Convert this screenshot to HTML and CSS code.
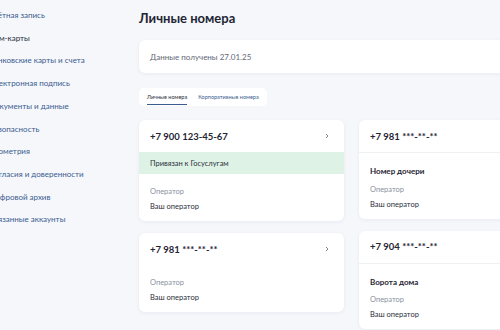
FILE: index.html
```html
<!DOCTYPE html>
<html lang="ru">
<head>
<meta charset="utf-8">
<title>Личные номера</title>
<link rel="stylesheet" href="styles.css">
</head>
<body>
<div class="page">
  <nav class="sidebar">
    <a class="nav-item">Учётная запись</a>
    <a class="nav-item active">Сим-карты</a>
    <a class="nav-item">Банковские карты и счета</a>
    <a class="nav-item">Электронная подпись</a>
    <a class="nav-item">Документы и данные</a>
    <a class="nav-item">Безопасность</a>
    <a class="nav-item">Биометрия</a>
    <a class="nav-item">Согласия и доверенности</a>
    <a class="nav-item">Цифровой архив</a>
    <a class="nav-item">Связанные аккаунты</a>
  </nav>
  <main class="main">
    <h1 class="title">Личные номера</h1>
    <div class="info-card">Данные получены 27.01.25</div>
    <div class="tabs">
      <span class="tab active">Личные номера</span>
      <span class="tab">Корпоративные номера</span>
    </div>
    <div class="grid">
      <div class="column">
        <div class="card">
          <div class="card-head">
            <span class="phone">+7 900 123-45-67</span>
            <svg class="chev" width="4" height="6" viewBox="0 0 4 6"><polyline points="1,1 3,3 1,5" fill="none" stroke="#7d8594" stroke-width="1"/></svg>
          </div>
          <div class="linked">Привязан к Госуслугам</div>
          <div class="card-body">
            <div class="label">Оператор</div>
            <div class="value">Ваш оператор</div>
          </div>
        </div>
        <div class="card">
          <div class="card-head">
            <span class="phone">+7 981 ***-**-**</span>
            <svg class="chev" width="4" height="6" viewBox="0 0 4 6"><polyline points="1,1 3,3 1,5" fill="none" stroke="#7d8594" stroke-width="1"/></svg>
          </div>
          <div class="card-body">
            <div class="label">Оператор</div>
            <div class="value">Ваш оператор</div>
          </div>
        </div>
      </div>
      <div class="column">
        <div class="card">
          <div class="card-head divided">
            <span class="phone">+7 981 ***-**-**</span>
          </div>
          <div class="card-body">
            <div class="name">Номер дочери</div>
            <div class="label">Оператор</div>
            <div class="value">Ваш оператор</div>
          </div>
        </div>
        <div class="card">
          <div class="card-head divided">
            <span class="phone">+7 904 ***-**-**</span>
          </div>
          <div class="card-body">
            <div class="name">Ворота дома</div>
            <div class="label">Оператор</div>
            <div class="value">Ваш оператор</div>
          </div>
        </div>
      </div>
    </div>
  </main>
</div>
</body>
</html>
```

FILE: styles.css
```css
html, body {
  margin: 0;
  padding: 0;
}
body {
  width: 500px;
  height: 330px;
  overflow: hidden;
  background: #f5f7fb;
  font-family: Lato, "Noto Sans", "DejaVu Sans", sans-serif;
  color: #1f2533;
}
.page {
  display: flex;
  align-items: flex-start;
}
.sidebar {
  flex-shrink: 0;
  width: 150px;
  margin-left: -11px;
  padding-top: 4px;
  display: flex;
  flex-direction: column;
}
.nav-item {
  display: block;
  font-size: 8px;
  line-height: 22.7px;
  color: #3b5c8f;
  white-space: nowrap;
}
.nav-item.active {
  color: #2a2f3a;
}
.main {
  flex-shrink: 0;
  width: 390px;
  padding-top: 10px;
}
.title {
  margin: 0 0 14px;
  font-size: 13px;
  line-height: 16px;
  font-weight: 700;
  color: #1f2533;
}
.info-card {
  height: 33px;
  display: flex;
  align-items: center;
  padding: 0 11px;
  background: #fff;
  border-radius: 6px;
  box-shadow: 0 1px 4px rgba(20, 40, 80, 0.06);
  font-size: 8px;
  color: #5f6876;
  margin-bottom: 15px;
}
.tabs {
  display: flex;
  width: fit-content;
  align-items: flex-start;
  gap: 11px;
  height: 18px;
  padding: 0 8px;
  background: #fff;
  border-radius: 5px;
  box-sizing: border-box;
  margin-bottom: 14px;
}
.tab {
  font-size: 5.5px;
  line-height: 8px;
  padding: 5px 0 3px;
  color: #3b5c8f;
  white-space: nowrap;
}
.tab.active {
  color: #2a2f3a;
  border-bottom: 1px solid #3b5c8f;
}
.grid {
  display: grid;
  grid-template-columns: 205px 205px;
  column-gap: 15px;
  align-items: start;
}
.column {
  display: flex;
  flex-direction: column;
  gap: 12px;
}
.card {
  background: #fff;
  border-radius: 6px;
  box-shadow: 0 1px 4px rgba(20, 40, 80, 0.06);
  overflow: hidden;
}
.card-head {
  height: 32px;
  padding: 0 15px 0 11px;
  display: flex;
  align-items: center;
  justify-content: space-between;
}
.card-head.divided {
  border-bottom: 1px solid #eef0f4;
}
.phone {
  font-size: 9.5px;
  font-weight: 700;
  color: #1f2533;
}
.chev {
  display: block;
}
.linked {
  height: 22px;
  display: flex;
  align-items: center;
  padding: 0 11px;
  background: #def3e6;
  font-size: 7.5px;
  color: #2a2f3a;
}
.card-body {
  padding: 10px 11px 7px;
}
.name {
  font-size: 8px;
  font-weight: 700;
  line-height: 16px;
  margin-bottom: 2.5px;
  color: #1f2533;
}
.label {
  font-size: 7.5px;
  line-height: 15px;
  color: #8a92a0;
}
.value {
  font-size: 7.5px;
  line-height: 15px;
  color: #2a2f3a;
}
```
